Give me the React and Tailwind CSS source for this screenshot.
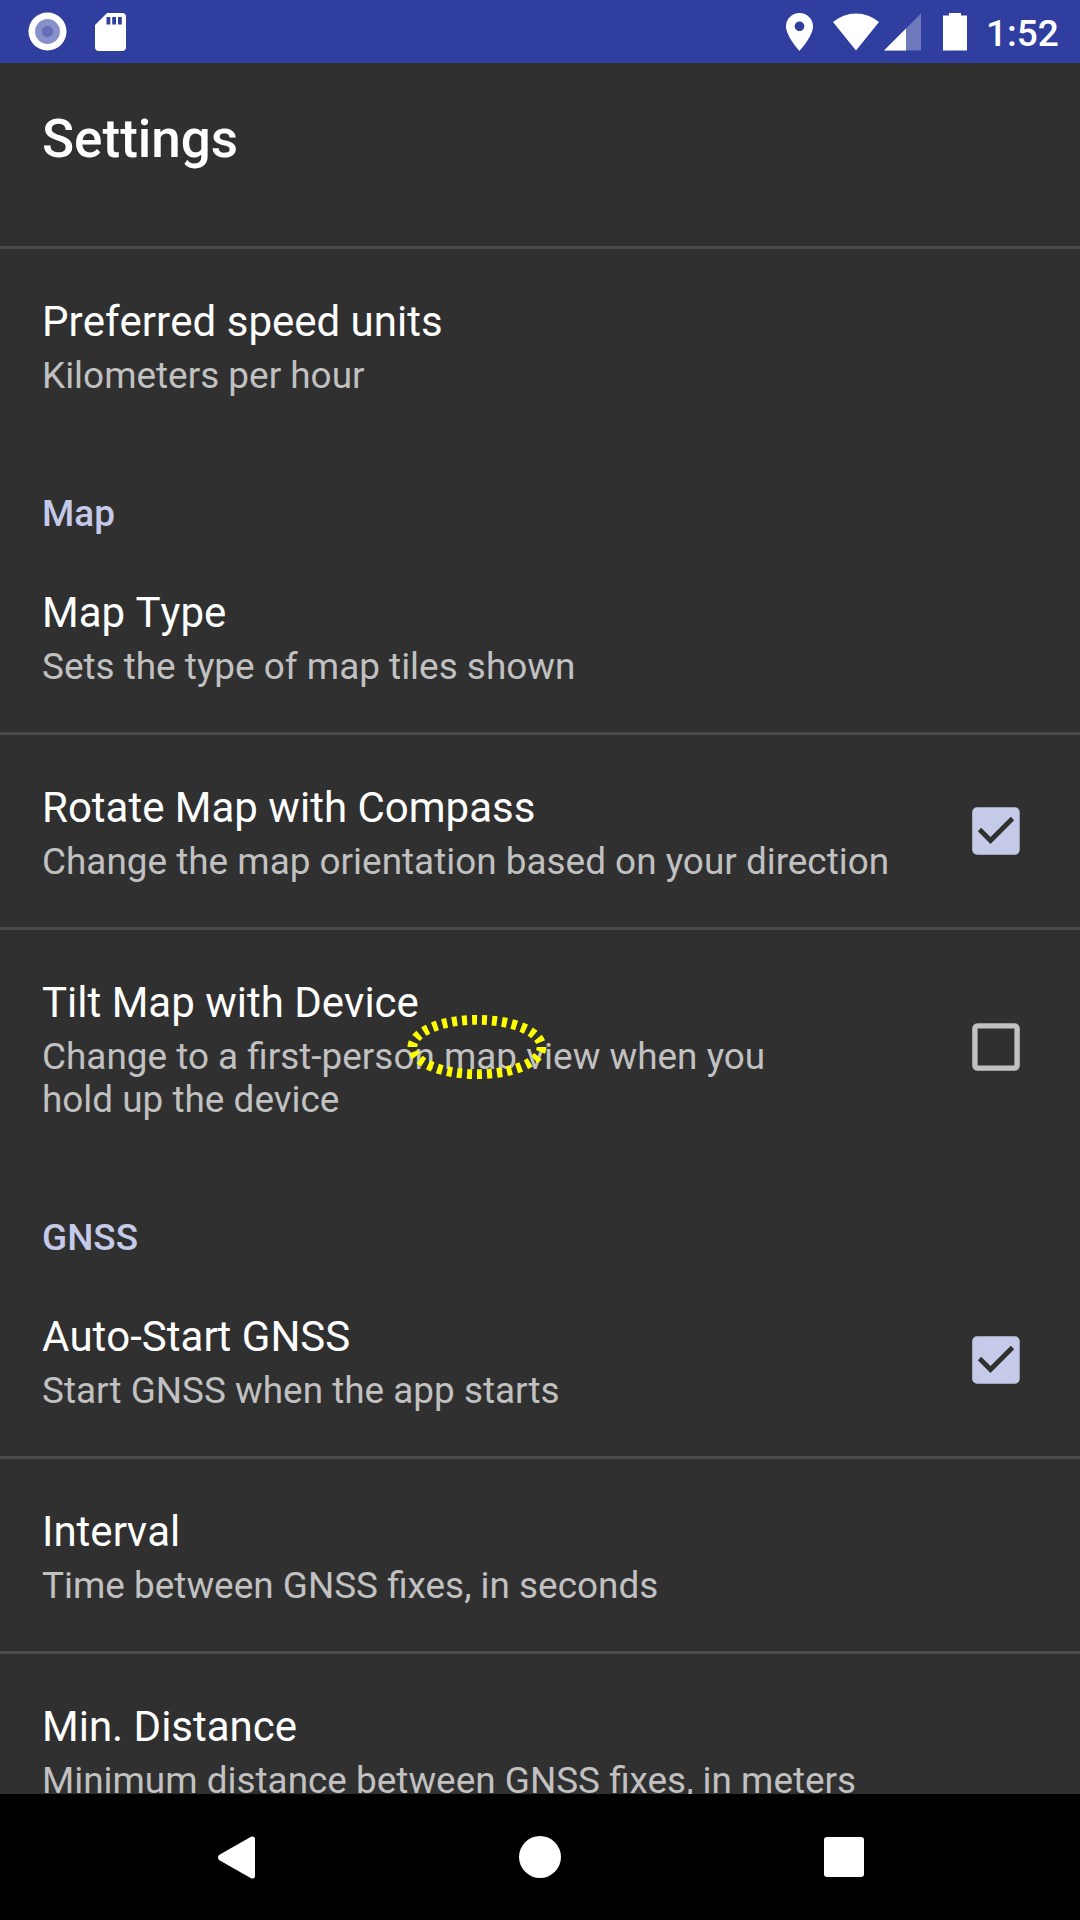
const check = (
  <svg viewBox="0 0 48 48" className="size-12"><rect x=".2" y=".2" width="47.500" height="47.500" rx="5" fill="#c5cae9"/><path d="M7.500 22.500 L18.500 33.500 L40.500 11.500" fill="none" stroke="#303030" strokeWidth="4.800"/></svg>
);
const empty = <svg viewBox="0 0 48 48" className="size-12"><rect x="2.900" y="2.900" width="42.200" height="42.200" rx="2.500" fill="none" stroke="#c1c1c1" strokeWidth="5.400"/></svg>;

function Row({ title, text, box, h = "h-[195px]", line = true, children }) {
  return (
    <div className={`relative flex shrink-0 items-center border-[#4b4b4b] ${line ? "border-t-3" : ""} ${h}`}>
      <div className="h-full flex-1 pl-[42px] pt-[48px]">
        <div className="text-[42px] leading-[49px] text-white [font-kerning:none]">{title}</div>
        <div className="mt-[8px] whitespace-pre-line text-[36.900px] leading-[43px] text-[#c1c1c1]">{text}</div>
      </div>
      {box && <div className="mr-[60px]">{box}</div>}
      {children}
    </div>
  );
}
const Head = ({ children }) => <div className="h-[63px] shrink-0 pl-[42px] pt-[15px] text-[36.900px] font-medium leading-[43px] text-[#c5cae9]">{children}</div>;

function StatusBar() {
  return (
    <div className="flex h-[63px] shrink-0 items-center bg-[#303f9f] pl-[28px] pr-[21px]">
      <svg viewBox="0 0 39 39" className="size-[39px]"><circle cx="19.500" cy="19.500" r="19" fill="#fff"/><circle cx="19.500" cy="19.500" r="12.500" fill="#8690c9"/><circle cx="19.500" cy="19.500" r="5.700" fill="#666fb5"/></svg>
      <svg viewBox="0 0 31 38" className="ml-[28px] h-[38px] w-[31px]" fillRule="evenodd" fill="#fff"><path d="M12 0H27Q31 0 31 4V34Q31 38 27 38H4Q0 38 0 34V12ZM11.500 4V11.500H15.300V4ZM17.200 4V11.500H21V4ZM23 4V11.500H26.800V4Z"/></svg>
      <div className="ml-auto flex items-center">
        <svg viewBox="5 2 14 20" preserveAspectRatio="none" className="h-[38px] w-[27px]" fill="#fff"><path d="M12 2C8.130 2 5 5.130 5 9c0 5.250 7 13 7 13s7-7.750 7-13c0-3.870-3.130-7-7-7zm0 9.500c-1.380 0-2.500-1.120-2.500-2.500s1.120-2.500 2.500-2.500 2.500 1.120 2.500 2.500-1.120 2.500-2.500 2.500z"/></svg>
        <svg viewBox="0 0 46 38" className="ml-[20px] h-[38px] w-[46px]" fill="#fff"><path d="M0 9Q10 .5 23 .5T46 9L23 37.500Z"/></svg>
        <svg viewBox="0 0 37 38" className="ml-[5px] h-[38px] w-[37px]" fill="#fff"><path d="M0 37.500L37 .5V37.500Z" opacity=".3"/><path d="M0 37.500L22 15.500V37.500Z"/></svg>
        <svg viewBox="0 0 24 38" className="ml-[22px] h-[38px] w-[24px]" fill="#fff"><path d="M0 2.500H6V0H18V2.500H24V37.500H0Z"/></svg>
        <span className="ml-[19px] mt-[4px] w-[73px] whitespace-nowrap text-[37px] font-medium leading-[43px] text-white">1:52</span>
      </div>
    </div>
  );
}

export default function App() {
  return (
    <div className="flex h-[1920px] w-[1080px] flex-col overflow-hidden bg-[#303030] font-['Roboto',sans-serif]">
      <StatusBar />
      <div className="h-[183px] shrink-0 pl-[42px] pt-[45px] text-[53px] font-medium leading-[62px] text-white">Settings</div>
      <main className="flex min-h-0 flex-1 flex-col overflow-hidden">
        <Row title="Preferred speed units" text="Kilometers per hour" />
        <div className="h-[36px] shrink-0" />
        <Head>Map</Head>
        <Row title="Map Type" text="Sets the type of map tiles shown" line={false} h="h-[192px]" />
        <Row title="Rotate Map with Compass" text="Change the map orientation based on your direction" box={check} />
        <Row title="Tilt Map with Device" text={"Change to a first-person map view when you\nhold up the device"} box={empty} h="h-[237px]">
          <svg viewBox="0 0 140 66" className="absolute left-[407px] top-[84px] h-[66px] w-[140px]"><ellipse cx="70" cy="33" rx="64.600" ry="27.200" fill="none" stroke="#ff0" strokeWidth="9.800" strokeDasharray="5 5" pathLength="300"/></svg>
        </Row>
        <div className="h-[37px] shrink-0" />
        <Head>GNSS</Head>
        <Row title="Auto-Start GNSS" text="Start GNSS when the app starts" box={check} line={false} h="h-[192px]" />
        <Row title="Interval" text="Time between GNSS fixes, in seconds" />
        <Row title="Min. Distance" text="Minimum distance between GNSS fixes, in meters" />
      </main>
      <nav className="flex h-[126px] shrink-0 items-center bg-black">
        <svg viewBox="0 0 37 43" className="ml-[218px] h-[43px] w-[37px]" fill="#fff"><path d="M1 19L33 .7Q37-.5 37 3V40Q37 43.500 33 42.300L1 24Q-1 21.500 1 19Z"/></svg>
        <div className="ml-[264px] size-[42px] rounded-full bg-white" />
        <div className="ml-[263px] size-[40px] rounded-[3px] bg-white" />
      </nav>
    </div>
  );
}
